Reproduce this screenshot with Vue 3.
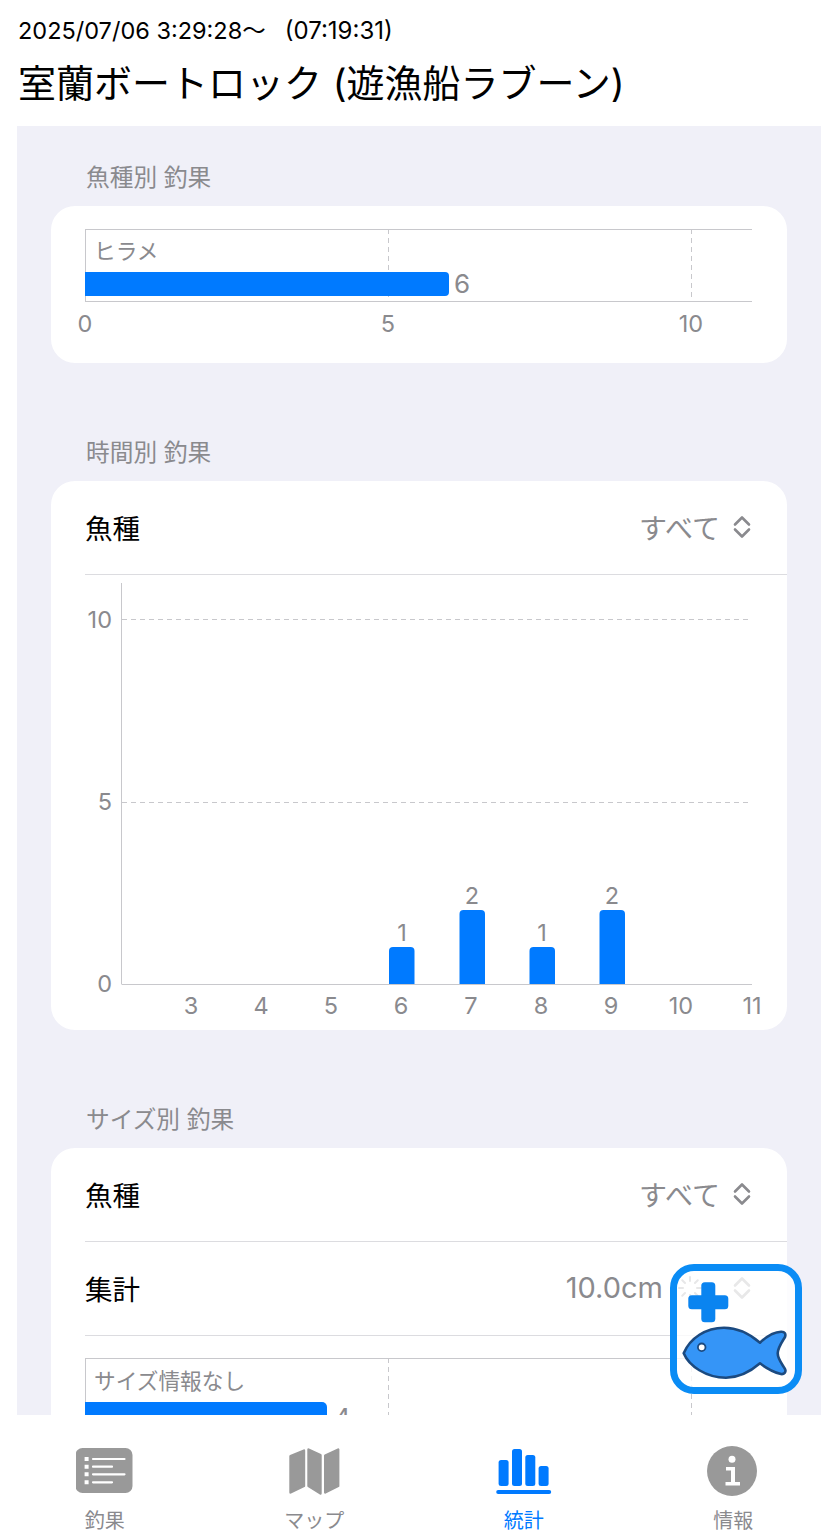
<script setup>
const xTicks = [[191,'3'],[261,'4'],[331,'5'],[401,'6'],[471,'7'],[541,'8'],[611,'9'],[681,'10'],[752,'11']]
const hourBars = [
  { x: 389, v: 1, y: 947, lx: 402 },
  { x: 459.5, v: 2, y: 910, lx: 472 },
  { x: 529.5, v: 1, y: 947, lx: 542 },
  { x: 599.5, v: 2, y: 910, lx: 612 }
]
const spinner = [0,45,90,135,180,225,270,315]
</script>

<template>
  <div class="page">
    <header class="head">
      <div class="date"><span>2025/07/06 3:29:28～</span><span class="elapsed">(07:19:31)</span></div>
      <h1 class="title">室蘭ボートロック (遊漁船ラブーン)</h1>
    </header>

    <main class="panel">
      <section class="section">
        <h2 class="sec-title">魚種別 釣果</h2>
        <div class="card">
          <svg class="chart" width="736" height="157" viewBox="51 206 736 157">
            <path class="axis" d="M85 229.5H752M85 301.5H752M85.5 229V301" />
            <path class="grid" d="M388.5 229V301M691.5 229V301" />
            <text class="lbl name" x="94" y="259">ヒラメ</text>
            <path class="bar" d="M85 272H445a4 4 0 0 1 4 4V292a4 4 0 0 1-4 4H85Z" />
            <text class="lbl big" x="454" y="293">6</text>
            <text class="lbl mid" x="85" y="332">0</text>
            <text class="lbl mid" x="388" y="332">5</text>
            <text class="lbl mid" x="691" y="332">10</text>
          </svg>
        </div>
      </section>

      <section class="section">
        <h2 class="sec-title">時間別 釣果</h2>
        <div class="card">
          <div class="row">
            <span class="row-name">魚種</span>
            <span class="row-val">すべて
              <svg class="updown" width="18" height="24" viewBox="0 0 18 24"><path d="M2 9.5L9 2.5L16 9.5M2 14.5L9 21.5L16 14.5" /></svg>
            </span>
          </div>
          <svg class="chart" width="736" height="455" viewBox="51 575 736 455">
            <path class="axis" d="M121.5 583V984.5M122 984.5H752" />
            <path class="grid" d="M122 619.5H748M122 802.5H748" />
            <text class="lbl end" x="112" y="628">10</text>
            <text class="lbl end" x="112" y="810">5</text>
            <text class="lbl end" x="112" y="992">0</text>
            <g v-for="b in hourBars" :key="b.x">
              <path class="bar" :d="`M${b.x} 984V${b.y + 4}a4 4 0 0 1 4-4H${b.x + 21.5}a4 4 0 0 1 4 4V984Z`" />
              <text class="lbl mid" :x="b.lx" :y="b.y - 6">{{ b.v }}</text>
            </g>
            <text v-for="t in xTicks" :key="t[1]" class="lbl mid" :x="t[0]" y="1014">{{ t[1] }}</text>
          </svg>
        </div>
      </section>

      <section class="section">
        <h2 class="sec-title">サイズ別 釣果</h2>
        <div class="card">
          <div class="row">
            <span class="row-name">魚種</span>
            <span class="row-val">すべて
              <svg class="updown" width="18" height="24" viewBox="0 0 18 24"><path d="M2 9.5L9 2.5L16 9.5M2 14.5L9 21.5L16 14.5" /></svg>
            </span>
          </div>
          <div class="row">
            <span class="row-name">集計</span>
            <span class="row-val num">10.0cm
              <svg class="spin" width="24" height="24" viewBox="-12 -12 24 24">
                <path v-for="a in spinner" :key="a" d="M0 -7V-11" :transform="`rotate(${a})`" />
              </svg>
              <svg class="updown" width="18" height="24" viewBox="0 0 18 24"><path d="M2 9.5L9 2.5L16 9.5M2 14.5L9 21.5L16 14.5" /></svg>
            </span>
          </div>
          <svg class="chart" width="736" height="200" viewBox="51 1336 736 200">
            <path class="axis" d="M85 1358.5H752M85.5 1358V1536" />
            <path class="grid" d="M388.5 1358V1536M691.5 1358V1536" />
            <text class="lbl name" x="94" y="1389">サイズ情報なし</text>
            <path class="bar" d="M85 1402H322a5 5 0 0 1 5 5V1426H85Z" />
            <text class="lbl big" x="334" y="1427">4</text>
          </svg>
        </div>
      </section>
    </main>

    <nav class="tabs">
      <div class="tab">
        <svg class="tab-icon" width="58" height="50" viewBox="0 0 58 50">
          <rect x="-0.5" y="2" width="57" height="45" rx="7" fill="#999" />
          <path d="M17 13H48.5M17 20.7H36M17 28.3H48.5M17 36.3H36" stroke="#fff" stroke-width="2.2" stroke-linecap="round" />
          <path d="M8.6 11h4v4h-4zM8.6 18.7h4v4h-4zM8.6 26.3h4v4h-4zM8.6 34.3h4v4h-4z" fill="#fff" />
        </svg>
        <span class="tab-label">釣果</span>
      </div>
      <div class="tab">
        <svg class="tab-icon" width="58" height="50" viewBox="0 0 58 50">
          <g fill="#999" stroke="#999" stroke-width="2.4" stroke-linejoin="round">
            <path d="M19 4.5L5.5 10V46.5L19 40Z" />
            <path d="M23.5 3.5L35.5 9V47.5L23.5 40Z" />
            <path d="M40.2 9.5L53.2 3.5V40L40.2 46.5Z" />
          </g>
        </svg>
        <span class="tab-label">マップ</span>
      </div>
      <div class="tab active">
        <svg class="tab-icon" width="58" height="50" viewBox="0 0 58 50">
          <rect x="3.6" y="14" width="10" height="26" rx="2.5" fill="#007aff" />
          <rect x="17" y="3" width="10" height="37" rx="2.5" fill="#007aff" />
          <rect x="30.3" y="9" width="10" height="31" rx="2.5" fill="#007aff" />
          <rect x="43.6" y="20" width="10" height="20" rx="2.5" fill="#007aff" />
          <rect x="1.2" y="44" width="55" height="4" rx="2" fill="#007aff" />
        </svg>
        <span class="tab-label">統計</span>
      </div>
      <div class="tab">
        <svg class="tab-icon" width="58" height="50" viewBox="0 0 58 50">
          <circle cx="28" cy="25" r="25" fill="#999" />
          <circle cx="28" cy="13.3" r="3.5" fill="#fff" />
          <path d="M22 21H31V36H36V39.5H21.5V36H27V24.5H22Z" fill="#fff" />
        </svg>
        <span class="tab-label">情報</span>
      </div>
    </nav>

    <button class="fab" type="button" aria-label="追加">
      <svg class="fab-art" width="116" height="116" viewBox="7 7 116 116">
        <rect x="31.3" y="18.3" width="14" height="40" rx="3.5" fill="#0a84f0" />
        <rect x="18.3" y="31.3" width="40" height="14" rx="3.5" fill="#0a84f0" />
        <path d="M13.7 89.3C20 74 36 63.7 54 63.7C68 63.7 80 70 90 78.7C96 73 103 68 111 67.7C115 67.5 116 70 115 73C112 78 107.7 84 107.7 89.3C107.7 95 112 100 115 105C116.5 108 114 110.5 111 110C103 108 96 104 90 99.3C80 108 68 113.7 56 113.7C36 113.7 19 102 13.7 89.3Z" fill="#3595f7" stroke="#1b4a80" stroke-width="2.6" stroke-linejoin="round" />
        <circle cx="31.7" cy="83.3" r="3.8" fill="#fff" stroke="#1b4a80" stroke-width="1.8" />
      </svg>
    </button>
  </div>
</template>

<style scoped>
.page {
  position: relative;
  width: 838px;
  height: 1536px;
  overflow: hidden;
  display: flex;
  flex-direction: column;
  background: #fff;
  color: #000;
  font-family: Inter, "Noto Sans CJK JP", sans-serif;
}
.head {
  height: 126px;
  flex: none;
  padding: 17px 18px 0;
  box-sizing: border-box;
}
.date {
  font-size: 23.5px;
  line-height: 28px;
  white-space: nowrap;
}
.elapsed {
  margin-left: 19px;
  font-size: 24px;
}
.title {
  margin: 12px 0 0;
  font-size: 38px;
  line-height: 52px;
  font-weight: 400;
  white-space: nowrap;
}
.panel {
  flex: 1;
  min-height: 0;
  margin: 0 17px;
  padding: 22px 34px 0;
  background: #f0f0f8;
  overflow: hidden;
  display: flex;
  flex-direction: column;
  gap: 60px;
}
.section {
  flex: none;
}
.sec-title {
  margin: 0;
  height: 58px;
  line-height: 60px;
  padding-left: 35px;
  font-size: 23.7px;
  font-weight: 400;
  color: #8a8a8e;
}
.card {
  background: #fff;
  border-radius: 24px;
  overflow: hidden;
}
.chart {
  display: block;
}
.row {
  margin-left: 34px;
  padding-right: 36px;
  padding-bottom: 2px;
  height: 91px;
  border-bottom: 1px solid #dcdce0;
  display: flex;
  align-items: center;
  justify-content: space-between;
  font-size: 27.5px;
}
.row-val {
  display: flex;
  align-items: center;
  gap: 13px;
  font-size: 28px;
  color: #8a8a8e;
}
.row-val.num {
  font-size: 29px;
}
.updown {
  fill: none;
  stroke: #8a8a8e;
  stroke-width: 2.6;
  stroke-linecap: round;
  stroke-linejoin: round;
}
.spin {
  margin-right: 18px;
  margin-left: 2px;
  stroke: #86868a;
  stroke-width: 2;
  stroke-linecap: round;
}
.axis {
  fill: none;
  stroke: #c8c8cc;
  stroke-width: 1;
}
.grid {
  fill: none;
  stroke: #c8c8cc;
  stroke-width: 1;
  stroke-dasharray: 5 4;
}
.bar {
  fill: #007aff;
}
.lbl {
  font-size: 23.5px;
  fill: #8a8a8e;
}
.lbl.big {
  font-size: 26px;
}
.lbl.name {
  font-size: 21.7px;
}
.mid {
  text-anchor: middle;
}
.end {
  text-anchor: end;
}
.tabs {
  height: 121px;
  flex: none;
  background: #fff;
  display: grid;
  grid-template-columns: repeat(4, 1fr);
}
.tab {
  display: flex;
  flex-direction: column;
  align-items: center;
  padding-top: 31px;
  color: #8a8a8e;
}
.tab-icon {
  display: block;
}
.tab-label {
  margin-top: 11px;
  font-size: 20px;
  line-height: 28px;
}
.active {
  color: #007aff;
}
.fab {
  position: absolute;
  left: 670px;
  top: 1264px;
  width: 132px;
  height: 130px;
  box-sizing: border-box;
  padding: 0;
  border: 7px solid #0a8cf5;
  border-radius: 24px;
  background: rgba(255, 255, 255, 0.8);
}
.fab-art {
  display: block;
}
</style>
